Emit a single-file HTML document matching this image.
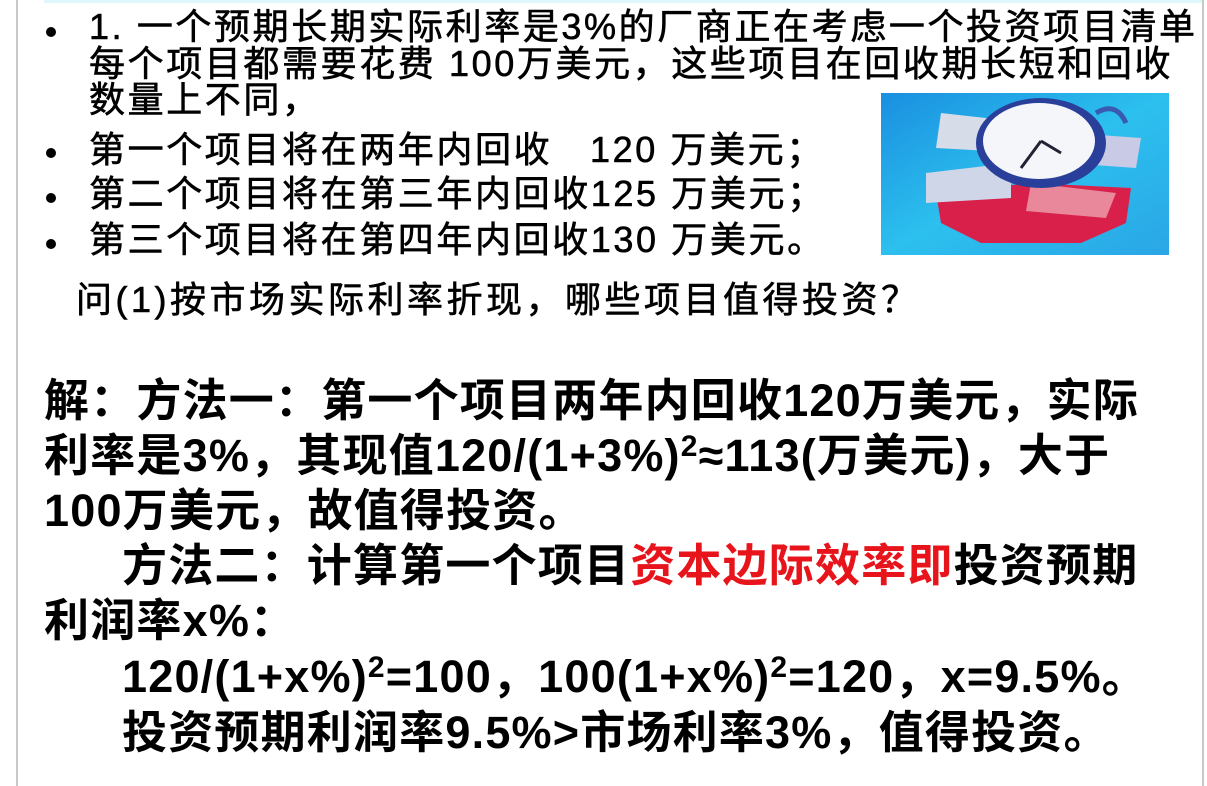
<!DOCTYPE html>
<html><head><meta charset="utf-8"><style>
html,body{margin:0;padding:0;background:#fff;}
body{width:1207px;height:786px;position:relative;overflow:hidden;font-family:"Liberation Sans","Noto Sans CJK SC",sans-serif;color:#000;}
.l{position:absolute;white-space:nowrap;}
.t{font-size:36px;line-height:36px;letter-spacing:2.6px;-webkit-text-stroke:0.6px #000;}
.b{font-size:45px;line-height:50px;font-weight:bold;letter-spacing:1.2px;}
.dot{position:absolute;width:10px;height:10px;border-radius:50%;background:#000;}
.red{color:#e8141b;}
sup{font-size:30px;line-height:0;vertical-align:15px;}
</style></head><body>
<div style="position:absolute;left:44px;top:0;width:1159px;height:3px;background:#dff7fb"></div>
<div style="position:absolute;left:16px;top:0;width:2px;height:786px;background:#c8c8c8"></div>
<div style="position:absolute;left:1202px;top:0;width:2px;height:786px;background:#c8c8c8"></div>

<div class="dot" style="left:46px;top:27px"></div>
<div class="l t" style="left:89px;top:9px">1. 一个预期长期实际利率是3%的厂商正在考虑一个投资项目清单</div>
<div class="l t" style="left:89px;top:46px">每个项目都需要花费 100万美元，这些项目在回收期长短和回收</div>
<div class="l t" style="left:89px;top:82px">数量上不同，</div>
<div class="dot" style="left:46px;top:148px"></div>
<div class="l t" style="left:89px;top:132px">第一个项目将在两年内回收&nbsp;&nbsp;&nbsp;120 万美元；</div>
<div class="dot" style="left:46px;top:193px"></div>
<div class="l t" style="left:89px;top:176px">第二个项目将在第三年内回收125 万美元；</div>
<div class="dot" style="left:46px;top:239px"></div>
<div class="l t" style="left:89px;top:222px">第三个项目将在第四年内回收130 万美元。</div>
<div class="l t" style="left:76px;top:282px;letter-spacing:3.5px">问(1)按市场实际利率折现，哪些项目值得投资？</div>

<svg style="position:absolute;left:881px;top:93px" width="288" height="162" viewBox="0 0 288 162">
<defs><linearGradient id="bg" x1="0" y1="0" x2="1" y2="1"><stop offset="0" stop-color="#1a8fe0"/><stop offset="0.5" stop-color="#2cc0ee"/><stop offset="1" stop-color="#2aa6e6"/></linearGradient></defs>
<rect width="288" height="162" fill="url(#bg)"/>
<polygon points="55,100 150,90 250,95 245,130 200,150 100,150 60,130" fill="#d8204a"/>
<polygon points="45,80 130,70 130,105 45,110" fill="#cfd6e8"/>
<polygon points="60,20 150,30 145,60 55,55" fill="#d6dce8"/>
<polygon points="150,90 235,100 225,125 145,118" fill="#e8889a"/>
<polygon points="190,40 260,45 255,75 185,70" fill="#c9cbe6"/>
<ellipse cx="160" cy="50" rx="65" ry="45" fill="#2a3f9a"/>
<ellipse cx="158" cy="48" rx="56" ry="38" fill="#f4f6fa"/>
<path d="M160 48 L140 75 M160 48 L180 60" stroke="#223" stroke-width="3"/>
<path d="M215 20 Q235 8 245 30" stroke="#3a5ab0" stroke-width="5" fill="none"/>
</svg>

<div class="l b" style="left:44px;top:376px">解：方法一：第一个项目两年内回收120万美元，实际</div>
<div class="l b" style="left:44px;top:431px">利率是3%，其现值120/(1+3%)<sup>2</sup>≈113(万美元)，大于</div>
<div class="l b" style="left:44px;top:486px">100万美元，故值得投资。</div>
<div class="l b" style="left:122px;top:541px">方法二：计算第一个项目<span class="red">资本边际效率即</span>投资预期</div>
<div class="l b" style="left:44px;top:596px">利润率x%：</div>
<div class="l b" style="left:122px;top:652px">120/(1+x%)<sup>2</sup>=100，100(1+x%)<sup>2</sup>=120，x=9.5%。</div>
<div class="l b" style="left:122px;top:708px">投资预期利润率9.5%&gt;市场利率3%，值得投资。</div>
</body></html>
